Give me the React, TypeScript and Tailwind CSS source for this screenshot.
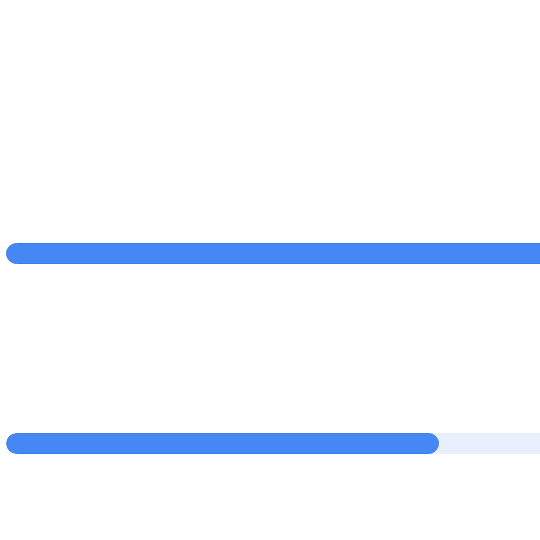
export default function App() {
  return (
    <div className="flex h-[540px] w-[540px] flex-col overflow-hidden bg-white pl-[6px] pt-[243px]">
      <div className="h-[21px] w-[600px] shrink-0 rounded-full border border-[#3b7cea] bg-[#4587f5]" />
      <div className="mt-[169px] flex h-[21px] w-[600px] shrink-0 overflow-hidden rounded-full bg-[#e8f0fe]">
        <div className="h-full w-[433px] rounded-full border border-[#3b7cea] bg-[#4587f5]" />
      </div>
    </div>
  );
}
